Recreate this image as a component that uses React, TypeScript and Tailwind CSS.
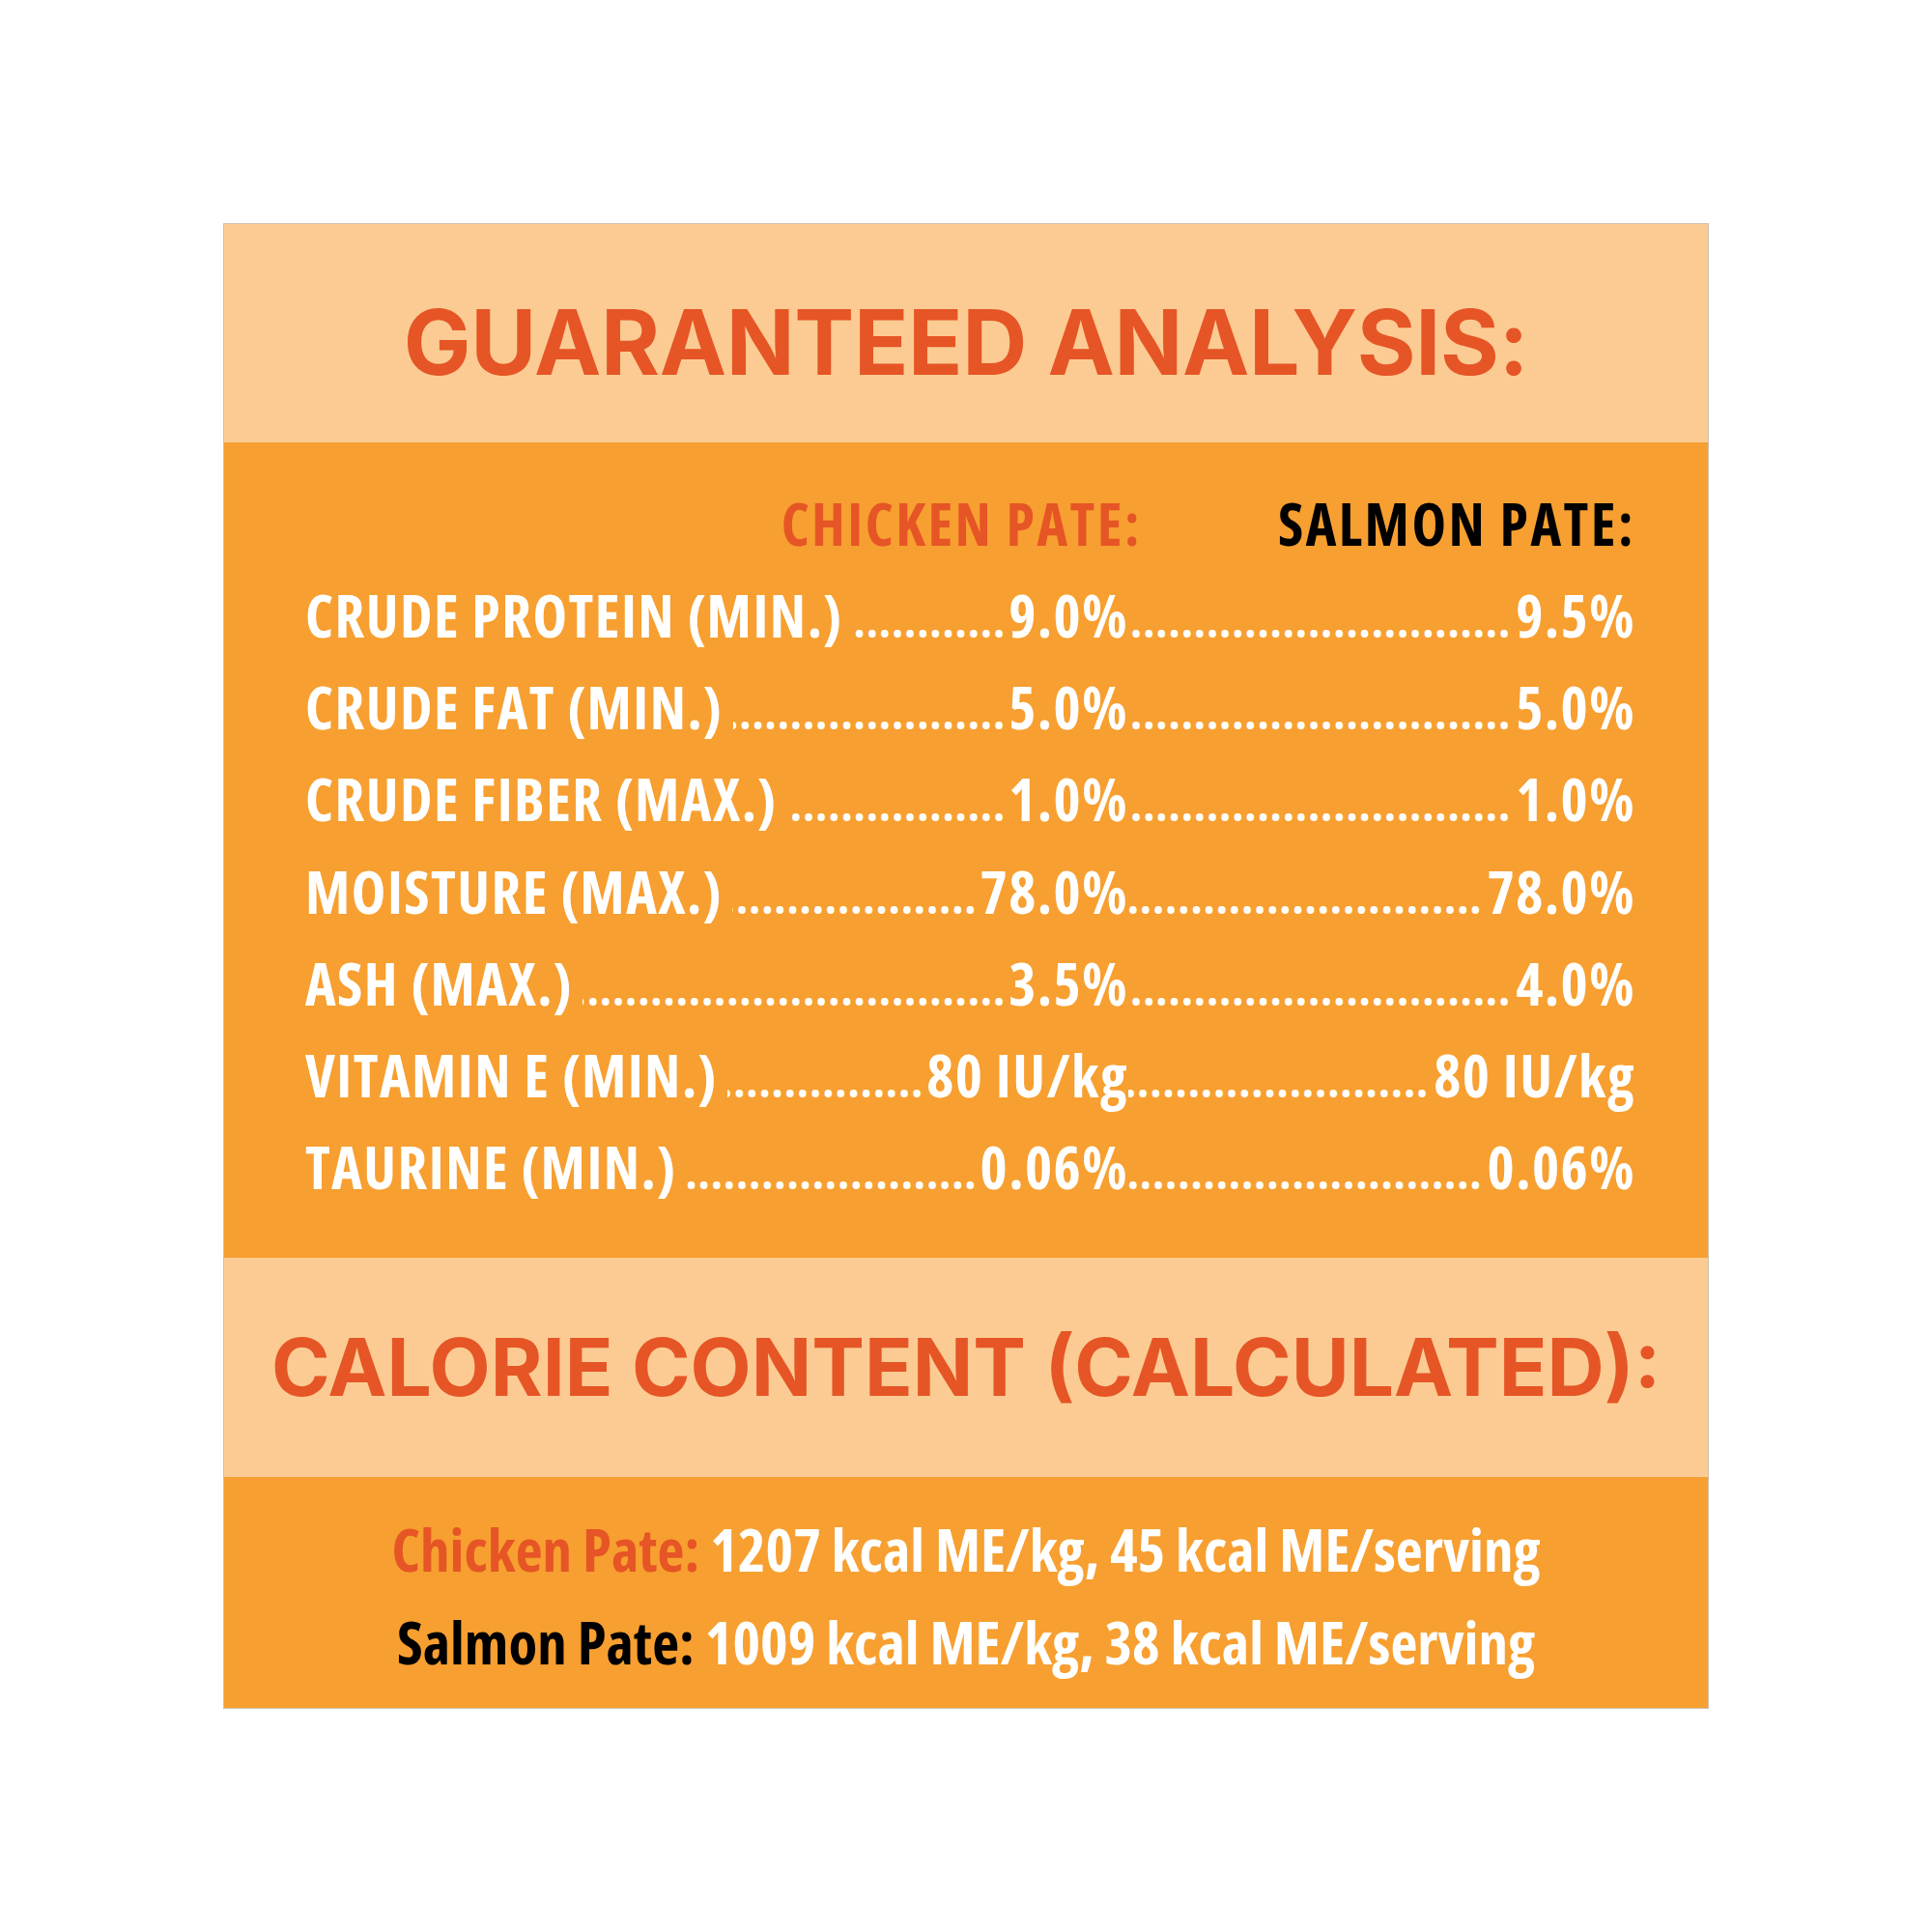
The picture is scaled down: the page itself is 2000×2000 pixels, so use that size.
import React from "react";

const DOTS = ".".repeat(90);

const rows = [
  { label: "CRUDE PROTEIN (MIN.)", chicken: "9.0%", salmon: "9.5%" },
  { label: "CRUDE FAT (MIN.)", chicken: "5.0%", salmon: "5.0%" },
  { label: "CRUDE FIBER (MAX.)", chicken: "1.0%", salmon: "1.0%" },
  { label: "MOISTURE (MAX.)", chicken: "78.0%", salmon: "78.0%" },
  { label: "ASH (MAX.)", chicken: "3.5%", salmon: "4.0%" },
  { label: "VITAMIN E (MIN.)", chicken: "80 IU/kg", salmon: "80 IU/kg" },
  { label: "TAURINE (MIN.)", chicken: "0.06%", salmon: "0.06%" },
];

const heading = "font-['Inter',sans-serif] font-bold text-[#e65525] leading-none whitespace-nowrap";
const condensed = "font-['Open_Sans',sans-serif] [font-stretch:75%] font-bold";

function Leader() {
  return (
    <span className="flex min-w-0 flex-1 items-baseline justify-end overflow-clip whitespace-nowrap">
      <span className="shrink-0 text-[48px] tracking-[0.9px]">{DOTS}</span>
    </span>
  );
}

export default function App() {
  return (
    <div className="flex h-[2000px] w-[2000px] items-center justify-center bg-white">
      <div className="flex h-[1538px] w-[1538px] flex-col border border-[#cfc2ad]">
        {/* Guaranteed analysis title */}
        <div className="flex h-[226px] shrink-0 items-center justify-center bg-[#fbcb93] pt-[18px]">
          <h1 className={`${heading} text-[93px] tracking-[-0.4px]`}>GUARANTEED ANALYSIS:</h1>
        </div>

        {/* Analysis table */}
        <div className={`${condensed} h-[844px] shrink-0 bg-[#f79f30] pl-[84px] pr-[75px] pt-[36px] text-[60px] leading-none`}>
          <div className="flex h-[95px] items-center tracking-[2.5px]">
            <div className="flex w-[866px] justify-end text-[#e65525]">CHICKEN PATE:</div>
            <div className="flex min-w-0 flex-1 justify-end text-black">SALMON PATE:</div>
          </div>
          {rows.map((r) => (
            <div key={r.label} className="flex h-[95.3px] items-center text-white tracking-[1.5px]">
              <div className="flex w-[852px] items-baseline">
                <span className="shrink-0 pr-[10px]">{r.label}</span>
                <Leader />
                <span className="shrink-0 pl-[3px]">{r.chicken}</span>
              </div>
              <div className="flex min-w-0 flex-1 items-baseline">
                <Leader />
                <span className="shrink-0 pl-[5px]">{r.salmon}</span>
              </div>
            </div>
          ))}
        </div>

        {/* Calorie title */}
        <div className="flex h-[227px] shrink-0 items-center justify-center bg-[#fbcb93]">
          <h2 className={`${heading} text-[82px]`}>CALORIE CONTENT (CALCULATED):</h2>
        </div>

        {/* Calorie lines */}
        <div className={`${condensed} flex flex-1 flex-col items-center bg-[#f79f30] pt-[26px] text-[61px] leading-none text-white`}>
          <p className="flex h-[96px] items-center whitespace-nowrap">
            <span className="text-[#e65525]">Chicken Pate:</span>&nbsp;1207 kcal ME/kg, 45 kcal ME/serving
          </p>
          <p className="flex h-[96px] items-center whitespace-nowrap">
            <span className="text-black">Salmon Pate:</span>&nbsp;1009 kcal ME/kg, 38 kcal ME/serving
          </p>
        </div>
      </div>
    </div>
  );
}
